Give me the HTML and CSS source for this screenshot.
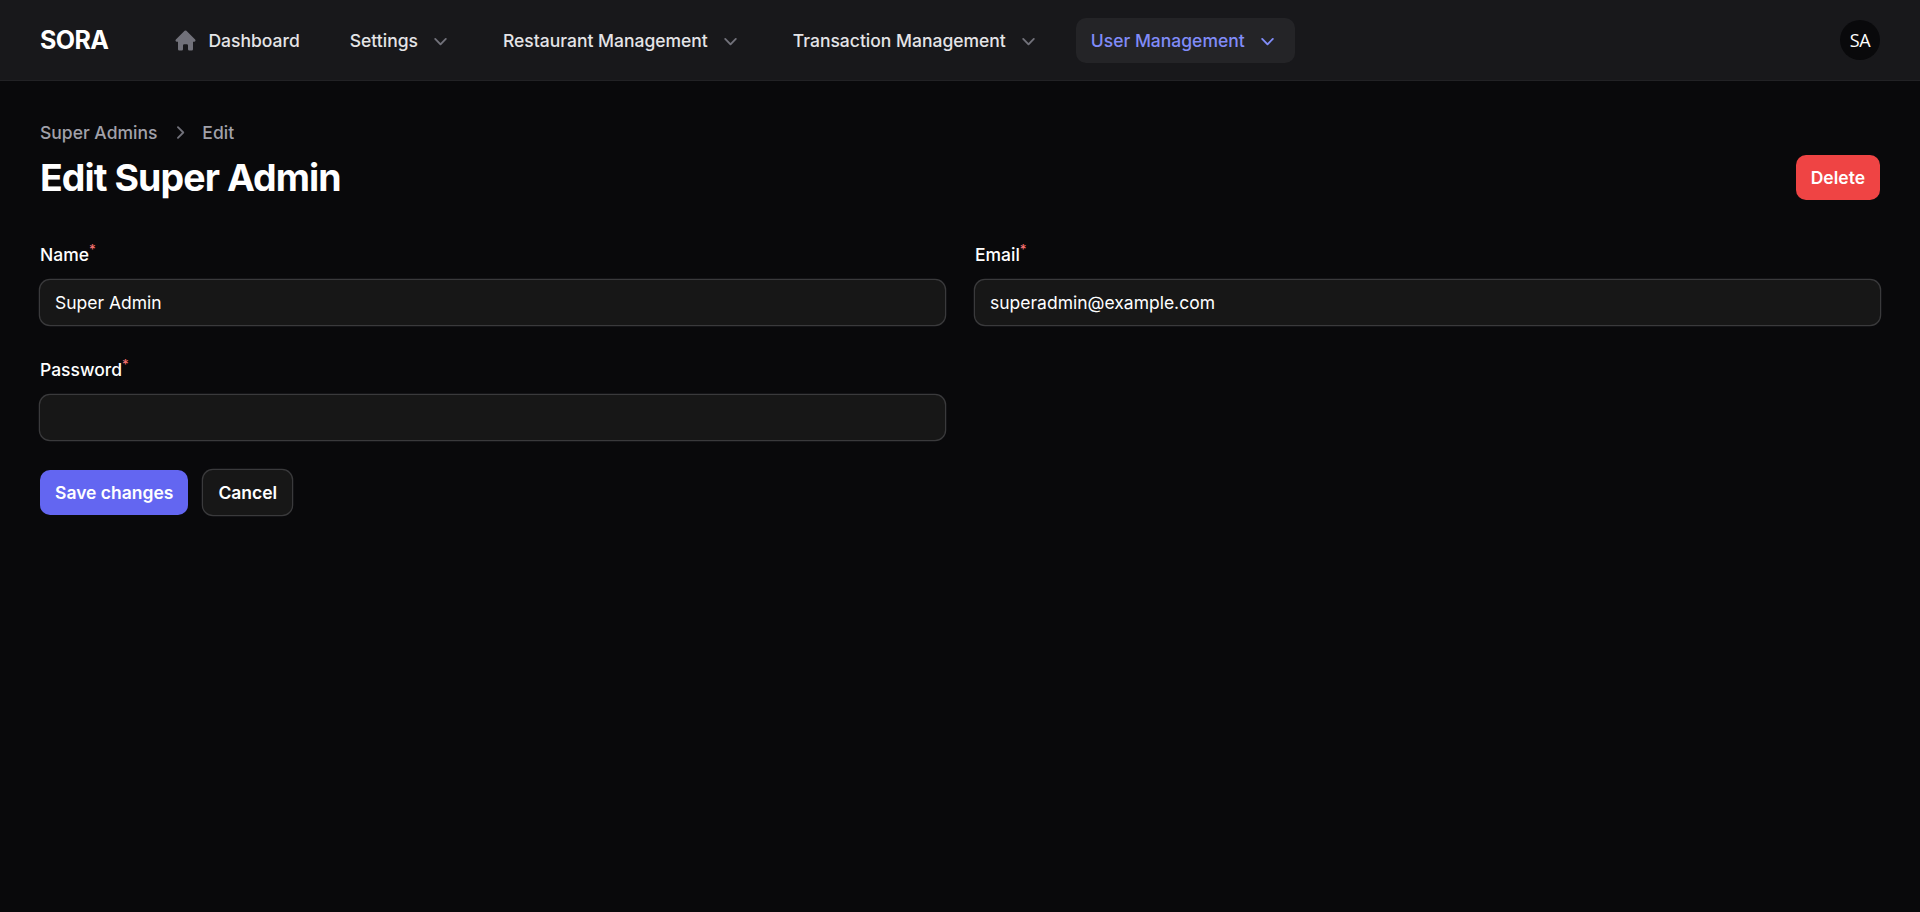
FILE: index.html
```html
<!DOCTYPE html>
<html lang="en">
<head>
<meta charset="utf-8">
<title>Edit Super Admin - SORA</title>
<link rel="stylesheet" href="styles.css">
</head>
<body>
<svg class="sprite" aria-hidden="true">
  <symbol id="chevron-down" viewBox="0 0 20 20"><path fill-rule="evenodd" d="M5.22 8.22a.75.75 0 0 1 1.06 0L10 11.94l3.72-3.72a.75.75 0 1 1 1.06 1.06l-4.25 4.25a.75.75 0 0 1-1.06 0L5.22 9.28a.75.75 0 0 1 0-1.06Z" clip-rule="evenodd"/></symbol>
</svg>
<header class="topbar">
  <a class="brand">SORA</a>
  <nav class="nav">
    <a class="nav-item"><svg class="icon" viewBox="0 0 20 20"><path fill-rule="evenodd" d="M9.293 2.293a1 1 0 0 1 1.414 0l7 7A1 1 0 0 1 17 11h-1v6a1 1 0 0 1-1 1h-2a1 1 0 0 1-1-1v-3a1 1 0 0 0-1-1H9a1 1 0 0 0-1 1v3a1 1 0 0 1-1 1H5a1 1 0 0 1-1-1v-6H3a1 1 0 0 1-.707-1.707l7-7Z" clip-rule="evenodd"/></svg><span>Dashboard</span></a>
    <a class="nav-item"><span>Settings</span><svg class="icon"><use href="#chevron-down"/></svg></a>
    <a class="nav-item"><span>Restaurant Management</span><svg class="icon"><use href="#chevron-down"/></svg></a>
    <a class="nav-item"><span>Transaction Management</span><svg class="icon"><use href="#chevron-down"/></svg></a>
    <a class="nav-item active"><span>User Management</span><svg class="icon"><use href="#chevron-down"/></svg></a>
  </nav>
  <div class="avatar">SA</div>
</header>
<main class="page">
  <nav class="breadcrumbs">
    <a>Super Admins</a>
    <svg class="icon" viewBox="0 0 20 20"><path fill-rule="evenodd" d="M8.22 5.22a.75.75 0 0 1 1.06 0l4.25 4.25a.75.75 0 0 1 0 1.06l-4.25 4.25a.75.75 0 0 1-1.06-1.06L11.94 10 8.22 6.28a.75.75 0 0 1 0-1.06Z" clip-rule="evenodd"/></svg>
    <a>Edit</a>
  </nav>
  <div class="heading-row">
    <h1 class="heading">Edit Super Admin</h1>
    <button class="btn danger">Delete</button>
  </div>
  <form class="form">
    <div class="field">
      <label class="label" for="name">Name<sup class="required">*</sup></label>
      <input class="input" id="name" type="text" value="Super Admin">
    </div>
    <div class="field">
      <label class="label" for="email">Email<sup class="required">*</sup></label>
      <input class="input" id="email" type="text" value="superadmin@example.com">
    </div>
    <div class="field">
      <label class="label" for="password">Password<sup class="required">*</sup></label>
      <input class="input" id="password" type="password">
    </div>
    <div class="actions">
      <button class="btn primary" type="button">Save changes</button>
      <button class="btn outline" type="button">Cancel</button>
    </div>
  </form>
</main>
</body>
</html>
```

FILE: styles.css
```css
*, *::before, *::after { box-sizing: border-box; }
body {
  margin: 0;
  min-height: 100vh;
  background: #09090b;
  color: #fff;
  font-family: Inter, "Liberation Sans", sans-serif;
  font-size: 17.5px;
  line-height: 25px;
}
.sprite { display: none; }
.icon { width: 25px; height: 25px; flex: none; fill: #71717a; }

.topbar {
  display: flex;
  align-items: center;
  height: 80px;
  padding: 0 40px;
  background: #18181b;
  box-shadow: 0 1px 0 #222225;
}
.brand {
  width: 68px;
  margin-right: 50.45px;
  font-size: 25px;
  font-weight: 700;
  letter-spacing: -0.025em;
}
.nav { display: flex; gap: 20px; }
.nav-item {
  display: flex;
  align-items: center;
  gap: 10px;
  padding: 10px 15px;
  border-radius: 10px;
  color: #e4e4e7;
  font-weight: 500;
  white-space: nowrap;
}
.nav-item.active { background: #242427; color: #818cf8; }
.nav-item.active .icon { fill: #818cf8; }
.avatar {
  display: flex;
  align-items: center;
  justify-content: center;
  width: 40px;
  height: 40px;
  margin-left: auto;
  border-radius: 50%;
  background: #09090b;
  font-family: "Open Sans", "Noto Sans", sans-serif;
  font-size: 18px;
  letter-spacing: -0.3px;
}

.page { padding: 40px; }
.breadcrumbs {
  display: flex;
  gap: 10px;
  margin-bottom: 10px;
  color: #a1a1aa;
  font-weight: 500;
}
.heading-row { display: flex; align-items: center; justify-content: space-between; }
.heading {
  margin: 0;
  font-size: 37.5px;
  font-weight: 700;
  line-height: 45px;
  letter-spacing: -0.025em;
}
.btn {
  height: 45px;
  padding: 0 15px;
  border: 0;
  border-radius: 10px;
  color: #fff;
  font: 600 17.5px/25px Inter, "Liberation Sans", sans-serif;
}
.danger { background: #ef4444; }
.primary { background: #6366f1; }
.outline { background: #171717; box-shadow: 0 0 0 1.25px #3a3a3c; }

.form {
  display: grid;
  grid-template-columns: 1fr 1fr;
  gap: 30px;
  margin-top: 40px;
}
.field { display: flex; flex-direction: column; gap: 10px; }
.label { height: 30px; font-weight: 500; line-height: 30px; }
.required {
  position: relative;
  top: -0.5em;
  color: #f87171;
  font-size: 75%;
  line-height: 0;
  vertical-align: baseline;
}
.input {
  width: 100%;
  height: 45px;
  padding: 0 15px;
  border: 0;
  border-radius: 10px;
  outline: 0;
  background: #171717;
  box-shadow: 0 0 0 1.25px #3a3a3c;
  color: #fff;
  font: 400 17.5px/30px Inter, "Liberation Sans", sans-serif;
}
.actions { grid-column: 1 / -1; display: flex; gap: 15px; }
```
